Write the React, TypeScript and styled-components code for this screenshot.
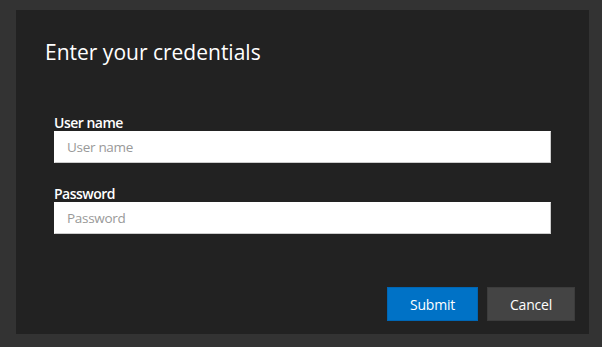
import styled, { createGlobalStyle } from "styled-components"

const GlobalStyle = createGlobalStyle`
  html, body {
    margin: 0;
    padding: 0;
    background-color: #333333;
    font-family: "Open Sans", "Noto Sans", sans-serif;
  }
`

const Page = styled.div`
  width: 602px;
  height: 347px;
  padding: 10px 13px 13px 16px;
  box-sizing: border-box;
`

const Dialog = styled.div`
  width: 573px;
  height: 324px;
  background-color: #222222;
  display: flex;
  flex-direction: column;
  box-sizing: border-box;
`

const Title = styled.h1`
  margin: 0;
  padding: 28px 0 0 29px;
  font-size: 21px;
  line-height: 28px;
  font-weight: 400;
  color: #ffffff;
`

const Form = styled.div`
  display: flex;
  flex-direction: column;
  gap: 22px;
  padding: 48px 38px 0;
`

const Field = styled.div`
  display: flex;
  flex-direction: column;
`

const Label = styled.label`
  font-size: 14px;
  line-height: 17px;
  font-weight: 600;
  letter-spacing: -0.5px;
  color: #ffffff;
`

const Input = styled.input`
  height: 32px;
  box-sizing: border-box;
  border: 1px solid #cccccc;
  border-top-color: #ffffff;
  border-left-color: #ffffff;
  background: #ffffff;
  padding: 0 12px;
  font-family: inherit;
  font-size: 13.5px;
  letter-spacing: -0.3px;
  color: #222222;
  outline: none;

  &::placeholder {
    color: #999999;
  }
`

const Footer = styled.div`
  margin-top: auto;
  display: flex;
  justify-content: flex-end;
  gap: 9px;
  padding: 0 14px 13px;
`

const Button = styled.button<{ $primary?: boolean }>`
  height: 34px;
  min-width: ${({ $primary }) => ($primary ? "91px" : "88px")};
  border: 1px solid ${({ $primary }) => ($primary ? "#0066b4" : "#3c3c3c")};
  background-color: ${({ $primary }) => ($primary ? "#0072c6" : "#444444")};
  color: #ffffff;
  font-family: inherit;
  font-size: 14px;
  letter-spacing: -0.2px;
  padding: 0 16px;
  cursor: pointer;
`

function App() {
  return (
    <>
      <GlobalStyle />
      <Page>
        <Dialog>
          <Title>Enter your credentials</Title>
          <Form>
            <Field>
              <Label htmlFor="user">User name</Label>
              <Input id="user" placeholder="User name" />
            </Field>
            <Field>
              <Label htmlFor="pass">Password</Label>
              <Input id="pass" type="password" placeholder="Password" />
            </Field>
          </Form>
          <Footer>
            <Button $primary>Submit</Button>
            <Button>Cancel</Button>
          </Footer>
        </Dialog>
      </Page>
    </>
  )
}

export default App
